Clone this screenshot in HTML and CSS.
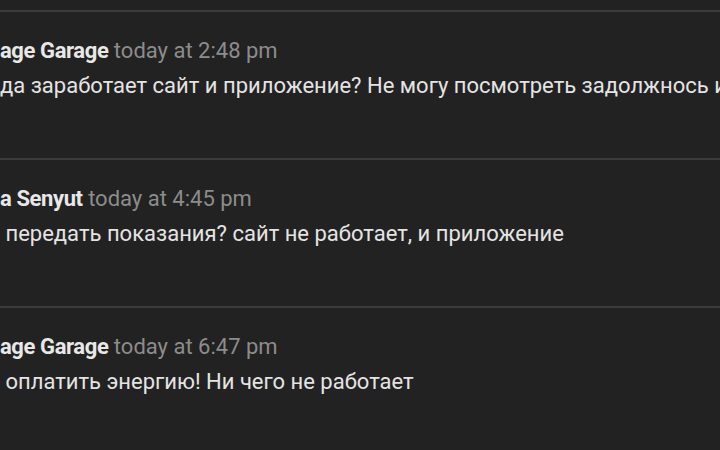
FILE: index.html
```html
<!DOCTYPE html>
<html lang="ru">
<head>
    <meta charset="UTF-8">
    <meta name="viewport" content="width=device-width, initial-scale=1.0">
    <title>Comments</title>
    <link rel="stylesheet" href="styles.css">
</head>
<body>
    <div class="thread">
        <div class="message">
            <div class="meta"><span class="author">age Garage</span> <span class="time">today at 2:48 pm</span></div>
            <div class="text">да заработает сайт и приложение? Не могу посмотреть задолжнось и</div>
        </div>
        <div class="message">
            <div class="meta"><span class="author">a Senyut</span> <span class="time">today at 4:45 pm</span></div>
            <div class="text"> передать показания? сайт не работает, и приложение</div>
        </div>
        <div class="message">
            <div class="meta"><span class="author">age Garage</span> <span class="time">today at 6:47 pm</span></div>
            <div class="text"> оплатить энергию! Ни чего не работает</div>
        </div>
    </div>
</body>
</html>
```

FILE: styles.css
```css
html, body {
    background: #222222;
}
body {
    margin: 0;
    padding-top: 10px;
    font-family: Roboto, "Liberation Sans", sans-serif;
    font-size: 22px;
    color: #e6e6e6;
    overflow: hidden;
}
.thread {
    width: 100%;
}
.message {
    border-top: 2px solid #3b3b3b;
    padding: 22px 0 55px 0;
    overflow: hidden;
}
.meta, .text {
    line-height: 34px;
    white-space: pre;
}
.text {
    margin-top: 1px;
    color: #e4e4e4;
}
.author {
    font-weight: 700;
    letter-spacing: -0.4px;
    color: #e8e8e8;
}
.time {
    color: #8c8c8c;
}
```
